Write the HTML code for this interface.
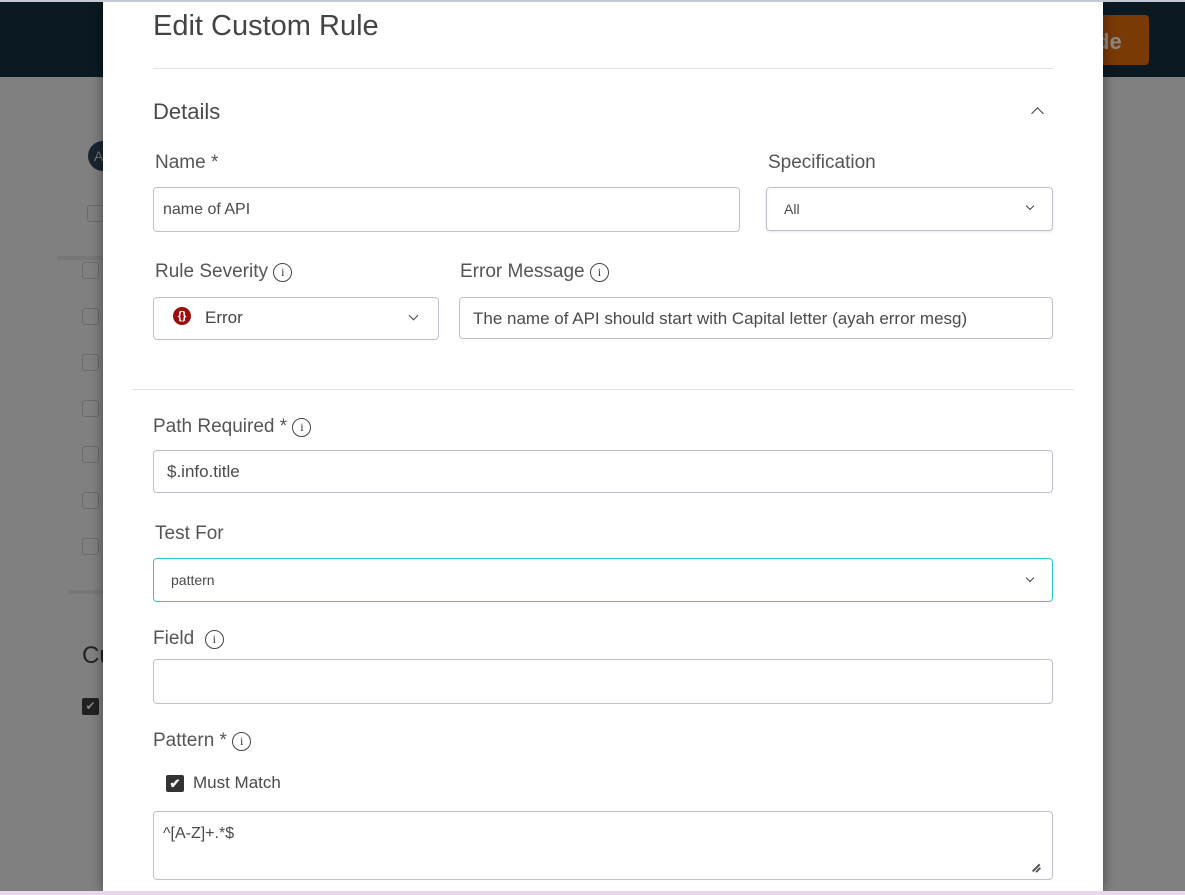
<!DOCTYPE html>
<html><head><meta charset="utf-8"><style>
*{box-sizing:border-box;margin:0;padding:0}
body{width:1185px;height:895px;overflow:hidden;position:relative;background:#808080;font-family:"Liberation Sans",sans-serif;color:#444}
.abs{position:absolute}
.hdr{left:0;top:0;width:1185px;height:77px;background:#0b1a22}
.btn{left:1060px;top:15px;width:89px;height:50px;background:#7a3a06;border-radius:4px;color:#8a8a8a;font-size:22px;font-weight:bold;padding:14px 0 0 36px}
.topline{left:0;top:0;width:1185px;height:2px;background:#c4c8d6;z-index:5}
.bottom{left:0;top:891px;width:1185px;height:4px;background:#e6d8ea;z-index:5}
.cb{width:17px;height:17px;border:1.5px solid #6a6a6a;border-radius:3px;left:82px}
.modal{left:103px;top:0;width:1000px;height:891px;background:#fff;box-shadow:0 0 12px rgba(0,0,0,.45)}
.lbl{font-size:19px;color:#555;font-weight:300}
.inp{border:1px solid #bcc1cc;border-radius:4px;background:#fff;font-size:16px;color:#4a4a4a}
.info{display:inline-block;width:19px;height:19px;border:1.5px solid #444;border-radius:50%;font-size:12px;text-align:center;line-height:16px;font-family:"Liberation Serif",serif;vertical-align:1px;color:#333}
.chev{position:absolute;width:7px;height:7px;border-right:1.5px solid #444;border-bottom:1.5px solid #444;transform:rotate(45deg)}
</style></head><body>
<div class="abs topline"></div>
<div class="abs hdr"></div>
<div class="abs btn">de</div>
<div class="abs" style="left:88px;top:141px;width:30px;height:30px;border-radius:50%;background:#1a2530;color:#777;font-size:14px;padding:7px 0 0 6px">A</div>
<div class="abs cb" style="top:205px;left:87px"></div>
<div class="abs" style="left:57px;top:256px;width:60px;height:4px;background:#777"></div>
<div class="abs cb" style="top:262px"></div>
<div class="abs cb" style="top:308px"></div>
<div class="abs cb" style="top:354px"></div>
<div class="abs cb" style="top:400px"></div>
<div class="abs cb" style="top:446px"></div>
<div class="abs cb" style="top:492px"></div>
<div class="abs cb" style="top:538px"></div>
<div class="abs" style="left:69px;top:590px;width:40px;height:4px;background:#777"></div>
<div class="abs" style="left:82px;top:642px;font-size:24px;color:#222">Cu</div>
<div class="abs" style="left:82px;top:698px;width:17px;height:17px;background:#222;border-radius:2px;color:#888;font-size:12px;text-align:center;line-height:17px">✔</div>

<div class="abs modal">
  <div class="abs" style="left:50px;top:10px;font-size:29px;color:#444;font-weight:300">Edit Custom Rule</div>
  <div class="abs" style="left:50px;top:68px;width:900px;height:1px;background:#e2e2e2"></div>
  <div class="abs" style="left:50px;top:99px;font-size:22px;color:#4a4a4a">Details</div>
  <div class="chev" style="left:930px;top:109px;transform:rotate(225deg);width:9px;height:9px"></div>

  <div class="abs lbl" style="left:52px;top:152px">Name *</div>
  <div class="abs inp" style="left:50px;top:187px;width:587px;height:45px;padding:13px 9px">name of API</div>
  <div class="abs lbl" style="left:665px;top:152px">Specification</div>
  <div class="abs inp" style="left:663px;top:187px;width:287px;height:44px;padding:13px 17px;font-size:14px;box-shadow:0 1px 2px rgba(0,0,0,.1)">All</div>
  <div class="chev" style="left:924px;top:203px;width:6px;height:6px"></div>

  <div class="abs lbl" style="left:52px;top:261px">Rule Severity <span class="info">i</span></div>
  <div class="abs inp" style="left:50px;top:297px;width:286px;height:43px"></div>
  <div class="abs" style="left:70px;top:307px;width:18px;height:18px;border-radius:50%;background:#9b0e0e;color:#fff;font-size:11px;font-weight:bold;text-align:center;line-height:18px">{}</div>
  <div class="abs" style="left:102px;top:308px;font-size:17px;color:#444">Error</div>
  <div class="chev" style="left:307px;top:312px"></div>
  <div class="abs lbl" style="left:357px;top:261px">Error Message <span class="info">i</span></div>
  <div class="abs inp" style="left:356px;top:297px;width:594px;height:42px;padding:11px 13px;font-size:17px">The name of API should start with Capital letter (ayah error mesg)</div>

  <div class="abs" style="left:29px;top:389px;width:942px;height:1px;background:#e2e2e2"></div>

  <div class="abs lbl" style="left:50px;top:416px">Path Required * <span class="info">i</span></div>
  <div class="abs inp" style="left:50px;top:450px;width:900px;height:43px;padding:11px 13px;font-size:17px">$.info.title</div>

  <div class="abs lbl" style="left:52px;top:523px">Test For</div>
  <div class="abs inp" style="left:50px;top:558px;width:900px;height:44px;border-color:#2ec4d0;padding:13px 17px;font-size:14px">pattern</div>
  <div class="chev" style="left:924px;top:575px;width:6px;height:6px"></div>

  <div class="abs lbl" style="left:50px;top:628px">Field &nbsp;<span class="info">i</span></div>
  <div class="abs inp" style="left:50px;top:659px;width:900px;height:45px"></div>

  <div class="abs lbl" style="left:50px;top:730px">Pattern * <span class="info">i</span></div>
  <div class="abs" style="left:63px;top:775px;width:18px;height:17px;background:#333;border-radius:2px;color:#fff;font-size:13px;text-align:center;line-height:17px;font-weight:bold">✔</div>
  <div class="abs" style="left:90px;top:773px;font-size:17px;color:#4a4a4a">Must Match</div>
  <div class="abs inp" style="left:50px;top:811px;width:900px;height:69px;padding:13px 9px;font-size:16px">^[A-Z]+.*$</div>
  <div class="abs" style="left:928px;top:867px;width:10px;height:1.5px;background:#555;transform:rotate(-45deg)"></div>
  <div class="abs" style="left:932px;top:869px;width:6px;height:1.5px;background:#555;transform:rotate(-45deg)"></div>
</div>
<div class="abs bottom"></div>
</body></html>
